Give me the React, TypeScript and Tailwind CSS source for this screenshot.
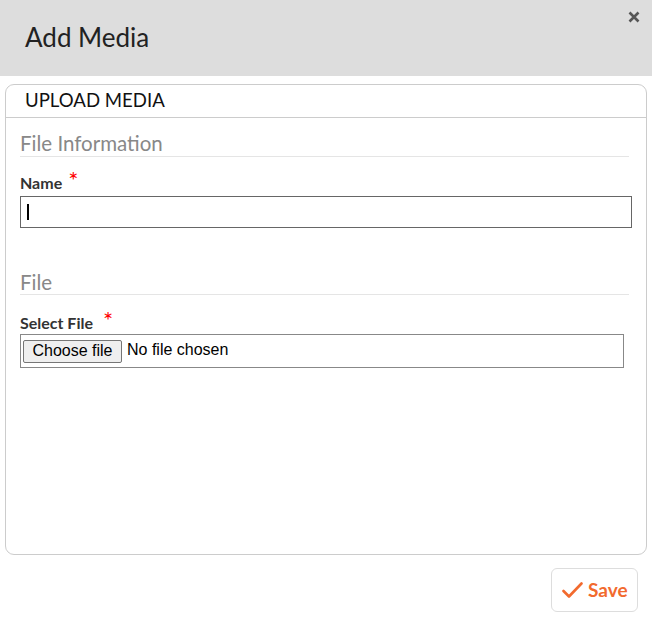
import React from "react";

export default function App() {
  return (
    <div className="w-[652px] h-[618px] bg-white relative overflow-hidden" style={{ fontFamily: "Lato, 'Noto Sans', sans-serif" }}>
      {/* Header */}
      <div className="h-[76px] bg-[#dddddd] pl-[25px] flex items-center">
        <h1 className="text-[26px] leading-[32px] text-[#222222] font-normal relative top-[-1px]">Add Media</h1>
      </div>
      <button className="absolute left-[627px] top-[10px] w-[14px] h-[14px] flex items-center justify-center" aria-label="Close">
        <svg width="12" height="12" viewBox="0 0 12 12">
          <path d="M1.5 1.5 L10.5 10.5 M10.5 1.5 L1.5 10.5" stroke="#555555" strokeWidth="2.6" strokeLinecap="butt" />
        </svg>
      </button>

      {/* Card */}
      <div className="mx-[5px] mt-[8px] h-[471px] border border-[#cccccc] rounded-[9px] flex flex-col">
        <div className="h-[33px] border-b border-[#cccccc] pl-[19px] flex items-center">
          <span className="text-[18.6px] leading-[22px] text-[#111111] relative top-[-1px]">UPLOAD MEDIA</span>
        </div>
        <div className="pl-[14px] flex flex-col">
          <div className="mt-[13px] w-[609px] border-b border-[#e5e5e5] pb-[1px]">
            <span className="block text-[20.5px] leading-[24px] text-[#888888]">File Information</span>
          </div>
          <div className="mt-[17px] h-[18px] flex items-start">
            <span className="text-[16px] leading-[18px] font-bold text-[#333333]">Name</span>
            <span className="ml-[6px] text-[24px] leading-[18px] text-[#ff0000] relative top-[-3px]">*</span>
          </div>
          <div className="mt-[4px] w-[612px] h-[32px] border border-[#666666] flex items-center pl-[6px]">
            <span className="block w-[2px] h-[16px] bg-black" />
          </div>

          <div className="mt-[42px] w-[609px] border-b border-[#e5e5e5] pb-[0px]">
            <span className="block text-[20.5px] leading-[24px] text-[#888888]">File</span>
          </div>
          <div className="mt-[19px] h-[18px] flex items-start">
            <span className="text-[16px] leading-[18px] font-bold text-[#333333]">Select File</span>
            <span className="ml-[10px] text-[24px] leading-[18px] text-[#ff0000] relative top-[-3px]">*</span>
          </div>
          <div className="mt-[2px] w-[604px] h-[34px] border border-[#888888] flex items-center pl-[2px] gap-[5px]" style={{ fontFamily: "'Liberation Sans', Arial, sans-serif" }}>
            <span className="h-[23px] w-[99px] bg-[#efefef] border border-[#767676] rounded-[2px] flex items-center justify-center text-[16px] text-black">Choose file</span>
            <span className="text-[16px] text-black relative top-[-1px]">No file chosen</span>
          </div>
        </div>
      </div>

      {/* Footer */}
      <div className="flex justify-end pr-[14px] mt-[13px]">
        <button className="w-[87px] h-[44px] border border-[#dddddd] rounded-[6px] bg-white flex items-center pl-[10px] gap-[5px]">
          <svg width="21" height="17" viewBox="0 0 21 17">
            <path d="M1.5 9 L7 14.5 L19.5 1.5" fill="none" stroke="#f26a2e" strokeWidth="2.6" strokeLinecap="round" strokeLinejoin="round" />
          </svg>
          <span className="text-[19px] leading-[22px] font-bold text-[#f26a2e]">Save</span>
        </button>
      </div>
    </div>
  );
}
